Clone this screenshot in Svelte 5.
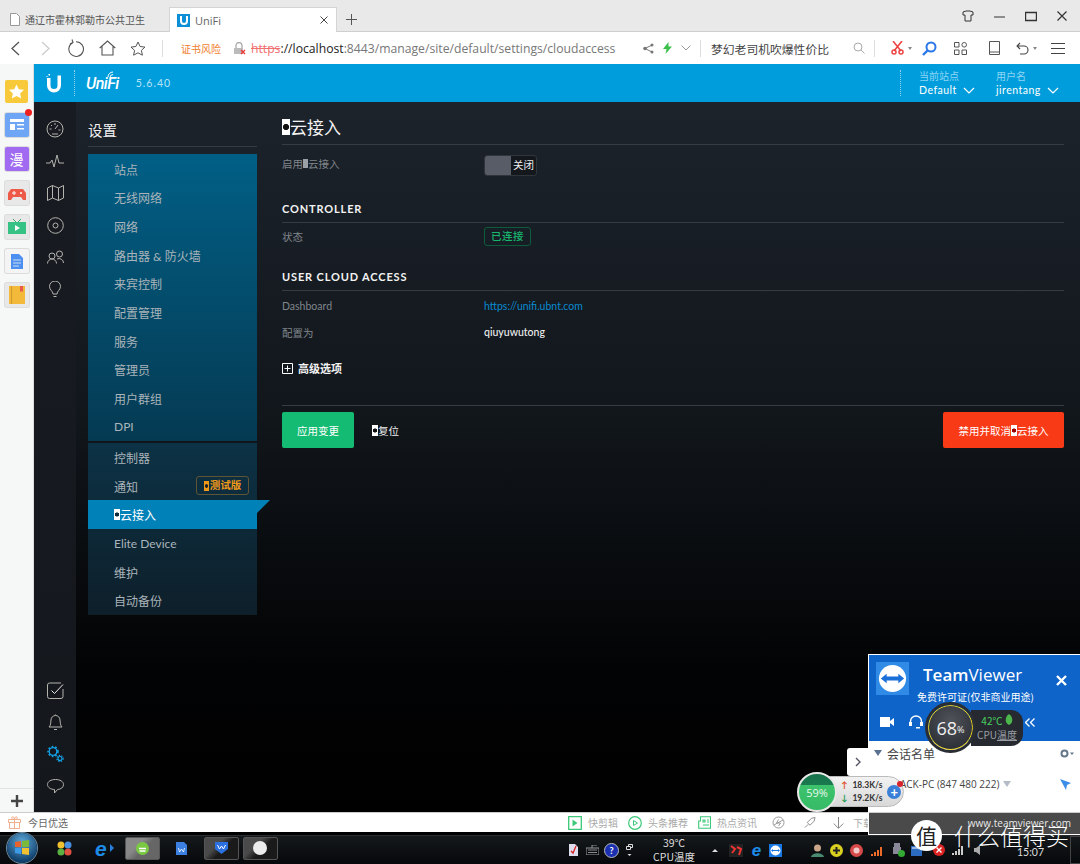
<script>
  const menuOne = ["站点", "无线网络", "网络", "路由器 & 防火墙", "来宾控制", "配置管理", "服务", "管理员", "用户群组", "DPI"];
  const stripIcons = [
    { bg: "#6ea5f5", kind: "news" },
    { bg: "#a06bf0", kind: "comic" },
    { bg: "#e8e8e8", kind: "game" },
    { bg: "#e8e8e8", kind: "tv" },
    { bg: "#f4f4f4", kind: "doc" },
    { bg: "#e8e8e8", kind: "book" },
  ];
</script>

<div class="screen">
  <div class="tabbar">
    <div class="tab">
      <svg width="10" height="13" viewBox="0 0 10 13"><path d="M.5.5h6l3 3v9h-9z" fill="#fff" stroke="#999" /></svg>
      <span class="tab-title">通辽市霍林郭勒市公共卫生</span>
    </div>
    <div class="tab active">
      <span class="favicon"><svg width="10" height="10" viewBox="0 0 10 10"><path d="M2 1v5a3 3 0 0 0 6 0V1" fill="none" stroke="#fff" stroke-width="2" /></svg></span>
      <span class="tab-name">UniFi</span>
      <svg class="tab-x" width="8" height="8" viewBox="0 0 8 8"><path d="M.5.5l7 7M7.500.5l-7 7" stroke="#444" /></svg>
    </div>
    <svg class="plus" width="11" height="11" viewBox="0 0 11 11"><path d="M5.500 0v11M0 5.500h11" stroke="#555" /></svg>
    <div class="winctl">
      <svg width="12" height="12" viewBox="0 0 12 12"><path d="M1 2l3-1h4l3 1v3H9v6H3V5H1z" fill="none" stroke="#333" /></svg>
      <svg width="11" height="11" viewBox="0 0 11 11"><path d="M0 6h11" stroke="#333" /></svg>
      <svg width="12" height="11" viewBox="0 0 12 11"><path d="M.5 1.500h11v8H.5z" fill="none" stroke="#333" stroke-width="1.400" /></svg>
      <svg width="10" height="10" viewBox="0 0 10 10"><path d="M.5.500l9 9M9.500.500l-9 9" stroke="#333" stroke-width="1.200" /></svg>
    </div>
  </div>

  <div class="addressbar">
    <svg class="nav-back" width="9" height="15" viewBox="0 0 9 15"><path d="M8 1L1 7.500l7 6.500" fill="none" stroke="#555" stroke-width="1.300" /></svg>
    <svg class="nav-fwd" width="9" height="15" viewBox="0 0 9 15"><path d="M1 1l7 6.500L1 14" fill="none" stroke="#ccc" stroke-width="1.300" /></svg>
    <svg class="nav-reload" width="17" height="18" viewBox="0 0 17 18"><path d="M5 3.500a7.300 7.300 0 1 0 3-.7M4 .5l1 3-3 1.200" fill="none" stroke="#555" stroke-width="1.100" /></svg>
    <svg class="nav-home" width="17" height="16" viewBox="0 0 17 16"><path d="M.7 8L8.500 1l7.800 7M3 6.500V15h11V6.500" fill="none" stroke="#555" stroke-width="1.100" /></svg>
    <svg class="nav-star" width="16" height="15" viewBox="0 0 16 15"><path d="M8 1l2.100 4.500 4.900.6-3.600 3.300 1 4.800L8 11.800l-4.400 2.400 1-4.800L1 6.100l4.900-.6z" fill="none" stroke="#555" /></svg>
    <span class="sep first"></span>
    <span class="risk">证书风险</span>
    <svg class="lock" width="13" height="13" viewBox="0 0 13 13"><path d="M3 6V3.500a3 3 0 0 1 6 0V6" fill="none" stroke="#aaa" stroke-width="1.300" /><path d="M1 6h9v6H1z" fill="#bbb" /><path d="M8 8l4 4M12 8l-4 4" stroke="#e33" stroke-width="1.300" /></svg>
    <span class="url"><s>https</s><b>://localhost</b>:8443/manage/site/default/settings/cloudaccess</span>
    <svg class="share" width="11" height="11" viewBox="0 0 11 11"><circle cx="2" cy="5.500" r="1.800" fill="#777" /><circle cx="9" cy="2" r="1.500" fill="#777" /><circle cx="9" cy="9" r="1.500" fill="#777" /><path d="M2 5.500L9 2M2 5.500L9 9" stroke="#777" /></svg>
    <svg class="bolt" width="9" height="12" viewBox="0 0 9 12"><path d="M5.500 0L0 7h3.500L2.500 12 9 4.500H5.500z" fill="#3cc04c" /></svg>
    <svg class="drop" width="10" height="6" viewBox="0 0 10 6"><path d="M.5.500L5 5 9.500.500" fill="none" stroke="#999" /></svg>
    <span class="sep"></span>
    <span class="search-text">梦幻老司机吹爆性价比</span>
    <svg class="glass" width="12" height="12" viewBox="0 0 12 12"><circle cx="5" cy="5" r="4" fill="none" stroke="#aaa" /><path d="M8 8l3.500 3.500" stroke="#aaa" /></svg>
    <span class="sep"></span>
    <svg class="scissors" width="13" height="14" viewBox="0 0 13 14"><path d="M2 0l8 10M11 0L3 10" stroke="#ee4444" stroke-width="1.600" /><circle cx="3" cy="11" r="2" fill="none" stroke="#ee4444" stroke-width="1.500" /><circle cx="10" cy="11" r="2" fill="none" stroke="#ee4444" stroke-width="1.500" /></svg>
    <span class="caret"></span>
    <svg class="blue-glass" width="15" height="15" viewBox="0 0 15 15"><circle cx="9" cy="6" r="4.500" fill="none" stroke="#2a78e8" stroke-width="2" /><path d="M6 9l-5 5" stroke="#2a78e8" stroke-width="2.400" /></svg>
    <svg class="apps" width="13" height="13" viewBox="0 0 13 13"><path d="M.5.500h4.500v4.500H.5zM.5 8h4.500v4.500H.5zM8 8h4.500v4.500H8z" fill="none" stroke="#555" /><circle cx="10.200" cy="2.800" r="2.300" fill="none" stroke="#555" /></svg>
    <svg class="tablet" width="11" height="14" viewBox="0 0 11 14"><path d="M.5.500h10v13H.5zM.5 11h10" fill="none" stroke="#555" /></svg>
    <svg class="undo" width="13" height="13" viewBox="0 0 13 13"><path d="M4 1L1 4l3 3M1 4h7a3.800 3.800 0 0 1 0 8H4" fill="none" stroke="#444" stroke-width="1.100" /></svg>
    <span class="caret"></span>
    <svg class="burger" width="14" height="11" viewBox="0 0 14 11"><path d="M0 .5h14M0 5.500h14M0 10.500h14" stroke="#444" /></svg>
  </div>

  <div class="middle">
    <aside class="strip">
      <div class="fav"><svg width="15" height="15" viewBox="0 0 16 15"><path d="M8 0l2.400 5 5.600.7-4.100 3.800 1.100 5.500-5-2.800L3 15l1.100-5.500L0 5.700 5.600 5z" fill="#fff" /></svg></div>
      {#each stripIcons as icon}
        <div class="strip-icon" style="background: {icon.bg}">
          {#if icon.kind === "news"}
            <span class="red-dot"></span>
            <svg width="16" height="14" viewBox="0 0 16 14"><path d="M1 1h14v3H1zM1 6h5v6H1zM8 6h7v1.500H8zM8 10h7v1.500H8z" fill="#fff" /></svg>
          {:else if icon.kind === "comic"}
            <span class="comic">漫</span>
          {:else if icon.kind === "game"}
            <svg width="18" height="15" viewBox="0 0 18 15"><path d="M3 3h12l3 4v7h-3l-2-3H5l-2 3H0V7z" fill="#ee5a48" /><path d="M4 7h4M6 5v4" stroke="#fff" /><circle cx="13" cy="7" r="1" fill="#fff" /></svg>
          {:else if icon.kind === "tv"}
            <svg width="18" height="16" viewBox="0 0 18 16"><path d="M5 0l3 3M13 0l-3 3" stroke="#35a86a" /><path d="M0 3h18v12H0z" fill="#35c284" /><path d="M7 6l5 3-5 3z" fill="#fff" /></svg>
          {:else if icon.kind === "doc"}
            <svg width="12" height="15" viewBox="0 0 12 15"><path d="M0 0h8l4 4v11H0z" fill="#4d8ff0" /><path d="M2 6h8M2 9h8M2 12h6" stroke="#cde" /></svg>
          {:else}
            <svg width="16" height="18" viewBox="0 0 16 18"><path d="M0 0h16v18H0z" fill="#f2b93a" /><path d="M2 0h1v18H2z" fill="#d2982a" /><path d="M11 0h3v6l-1.500-1L11 6z" fill="#e85a4a" /></svg>
          {/if}
        </div>
      {/each}
      <div class="strip-add">
        <svg width="12" height="12" viewBox="0 0 12 12"><path d="M6 0v12M0 6h12" stroke="#444" stroke-width="2.400" /></svg>
      </div>
    </aside>

    <div class="app">
      <header class="topbar">
        <svg class="u-logo" width="16" height="19" viewBox="0 0 16 19"><path d="M4.500 4v7.500a3.500 3.500 0 0 0 7 0V1.500h3.500v10a7 7 0 0 1-14 0V4z" fill="#fff" /><path d="M2.500 0h1.500v1.500H2.500zM.5 2h1v1h-1z" fill="#fff" /></svg>
        <span class="logo-sep"></span>
        <span class="brand">UniFi<svg class="arcs" width="9" height="7" viewBox="0 0 9 7"><path d="M1 6a5 5 0 0 1 5-5M3 6.500a3 3 0 0 1 3-3" fill="none" stroke="#fff" /></svg></span>
        <span class="version">5.6.40</span>
        <span class="logo-sep right"></span>
        <div class="picker site">
          <small>当前站点</small>
          <span>Default <svg width="12" height="7" viewBox="0 0 12 7"><path d="M1 1l5 5 5-5" fill="none" stroke="#fff" stroke-width="1.200" /></svg></span>
        </div>
        <div class="picker">
          <small>用户名</small>
          <span>jirentang <svg width="12" height="7" viewBox="0 0 12 7"><path d="M1 1l5 5 5-5" fill="none" stroke="#fff" stroke-width="1.200" /></svg></span>
        </div>
      </header>

      <div class="workspace">
        <nav class="rail">
          <div class="rail-group">
            <svg width="18" height="18" viewBox="0 0 18 18"><circle cx="9" cy="9" r="8" /><path d="M9 9l3-4M3.500 9h2M12.500 10h2M5 5l1 1M9 3v2M6 14h6" /></svg>
            <svg width="18" height="14" viewBox="0 0 18 14"><path d="M0 9h4l2-3 2 7 3-12 2 8h5" /></svg>
            <svg width="17" height="16" viewBox="0 0 17 16"><path d="M.5 3l5-2.500 6 2.500 5-2.500V13l-5 2.500-6-2.500-5 2.500zM5.500.5v12.500M11.500 3v12.500" /></svg>
            <svg width="17" height="17" viewBox="0 0 17 17"><circle cx="8.500" cy="8.500" r="7.800" /><circle cx="8.500" cy="8.500" r="2.500" /></svg>
            <svg width="17" height="14" viewBox="0 0 17 14"><circle cx="5" cy="6" r="3" /><circle cx="12.500" cy="4" r="3" /><path d="M.5 13.500a4.500 4.500 0 0 1 9 0M10 9a4.500 4.500 0 0 1 6.500 4" /></svg>
            <svg width="12" height="17" viewBox="0 0 12 17"><path d="M4 13c0-3-3.500-4-3.500-7.500a5.500 5.500 0 0 1 11 0C11.500 9 8 10 8 13zM4.500 15.500h3" /></svg>
          </div>
          <div class="rail-group">
            <svg width="17" height="17" viewBox="0 0 17 17"><path d="M14 1H2.500a2 2 0 0 0-2 2v11.500a2 2 0 0 0 2 2H14a2 2 0 0 0 2-2V7" /><path class="bright" d="M4.500 8.500l3 3L16 2.500" /></svg>
            <svg width="15" height="17" viewBox="0 0 15 17"><path d="M1 13c2-2 1.500-4 2-7a4.500 4.500 0 0 1 9 0c.5 3 0 5 2 7zM6 15.500h3M7.500 1V.5" /></svg>
            <svg class="gear" width="17" height="18" viewBox="0 0 17 18"><circle cx="6" cy="6.500" r="3.800" stroke-width="1.300" /><circle cx="6" cy="6.500" r="5" stroke-width="1.500" stroke-dasharray="1.700 1.900" /><circle cx="13" cy="13.500" r="2" stroke-width="1.100" /><circle cx="13" cy="13.500" r="3.100" stroke-width="1.200" stroke-dasharray="1.300 1.300" /></svg>
            <svg width="17" height="15" viewBox="0 0 17 15"><path d="M8.500.5c4.500 0 8 2 8 5s-3 5-6 5l-3 3.500v-3.500c-3.500 0-7-2-7-5s3.500-5 8-5z" /></svg>
          </div>
        </nav>

        <div class="settings">
          <div class="side">
            <h2>设置</h2>
            <ul class="panel one">
              {#each menuOne as item}
                <li>{item}</li>
              {/each}
            </ul>
            <ul class="panel two">
              <li>控制器</li>
              <li>通知 <span class="beta"><i class="orange-box"></i>测试版</span></li>
              <li class="current"><i class="box"></i>云接入</li>
              <li>Elite Device</li>
              <li>维护</li>
              <li>自动备份</li>
            </ul>
          </div>

          <main class="content">
            <h1><i class="box big"></i>云接入</h1>
            <div class="row enable">
              <label>启用<i class="box dim"></i>云接入</label>
              <div class="toggle"><span class="knob"></span><span class="off">关闭</span></div>
            </div>
            <h3 class="ctrl">CONTROLLER</h3>
            <div class="row status">
              <label>状态</label>
              <span class="connected">已连接</span>
            </div>
            <h3 class="cloud">USER CLOUD ACCESS</h3>
            <div class="row dash">
              <label>Dashboard</label>
              <a href="#top">https://unifi.ubnt.com</a>
            </div>
            <div class="row cfg">
              <label>配置为</label>
              <strong>qiuyuwutong</strong>
            </div>
            <div class="advanced">
              <svg width="11" height="11" viewBox="0 0 11 11"><path d="M.5.500h10v10H.5zM5.500 2.500v6M2.500 5.500h6" fill="none" stroke="#fff" /></svg>
              高级选项
            </div>
            <div class="actions">
              <button class="apply">应用变更</button>
              <span class="reset"><i class="box"></i>复位</span>
              <button class="disable">禁用并取消<i class="box"></i>云接入</button>
            </div>
          </main>
        </div>
      </div>
    </div>
  </div>

  <div class="statusbar">
    <svg class="gift" width="13" height="13" viewBox="0 0 13 13"><path d="M.5 3.500h12v3H.5zM1.500 6.500h10v6h-10zM6.500 3.500v9M6.500 3.500C4 3.500 3 2 4 1s2.500.5 2.500 2.500zM6.500 3.500c2.500 0 3.500-1.500 2.500-2.500S6.500 1.500 6.500 3.500z" fill="none" stroke="#f0b090" /></svg>
    <span class="today">今日优选</span>
    <svg class="st-ico" width="14" height="14" viewBox="0 0 14 14"><path d="M.7.700h12.600v12.600H.7z" fill="none" stroke="#3cc878" stroke-width="1.300" /><path d="M4.500 3.500l5 3.500-5 3.500z" fill="#3cc878" /></svg>
    <span class="st-text">快剪辑</span>
    <svg class="st-ico" width="14" height="14" viewBox="0 0 14 14"><circle cx="7" cy="7" r="6.300" fill="none" stroke="#3cc878" stroke-width="1.200" /><path d="M5.500 4.500l4 2.500-4 2.500z" fill="none" stroke="#3cc878" /></svg>
    <span class="st-text">头条推荐</span>
    <svg class="st-ico" width="13" height="13" viewBox="0 0 13 13"><path d="M2.500.7h10v11.600H.7V5h1.800zM5 4h2v2H5zM9 4h2M9 6h2M5 9h6" fill="none" stroke="#3cc878" stroke-width="1.100" /></svg>
    <span class="st-text">热点资讯</span>
    <svg class="st-gray" width="13" height="13" viewBox="0 0 13 13"><circle cx="6.500" cy="6.500" r="5.500" fill="none" stroke="#999" /><path d="M2 9l9-5M6.500 3.500L4.500 7h4l-2 3" fill="none" stroke="#999" /></svg>
    <svg class="st-pin" width="12" height="13" viewBox="0 0 13 13"><path d="M12 1L8 2 3.500 6.500l3 3L11 5zM4.500 8.500L1 12" fill="none" stroke="#888" /></svg>
    <svg class="st-down" width="11" height="12" viewBox="0 0 11 12"><path d="M5.500 0v11M.7 6.500l4.800 4.800 4.800-4.800" fill="none" stroke="#888" /></svg>
    <span class="st-text dl">下载</span>
  </div>

  <div class="taskbar">
    <span class="orb"><svg width="16" height="16" viewBox="0 0 16 16"><path d="M1 2l6-1v6H1z" fill="#e8622e" /><path d="M8 1l7-1v7H8z" fill="#7cbb3a" /><path d="M1 8h6v6l-6-1z" fill="#3c9be8" /><path d="M8 8h7v7l-7-1z" fill="#f0c030" /></svg></span>
    <svg class="tk-hub" width="15" height="15" viewBox="0 0 15 15"><circle cx="4" cy="4" r="3.500" fill="#f0c030" /><circle cx="11" cy="4" r="3.500" fill="#4a90e0" /><circle cx="4" cy="11" r="3.500" fill="#5ab040" /><circle cx="11" cy="11" r="3.500" fill="#e05040" /></svg>
    <span class="tk-ie">e</span>
    <span class="tk-arrow"></span>
    <span class="tk-btn lit"><svg width="13" height="13" viewBox="0 0 13 13"><circle cx="6.500" cy="6.500" r="6.500" fill="#7ac943" /><path d="M3 6.500h7M3.500 9h6" stroke="#fff" stroke-width="1.500" /></svg></span>
    <span class="tk-plain"><svg width="11" height="13" viewBox="0 0 11 13"><path d="M0 0h8l3 3v10H0z" fill="#3b7fe0" /><path d="M2.500 6l1 4 2-3 2 3 1-4" fill="none" stroke="#fff" stroke-width=".8" /></svg></span>
    <span class="tk-btn"><svg width="13" height="12" viewBox="0 0 13 12"><path d="M0 0h13v7l-6.500 5L0 7z" fill="#2a70e0" /><path d="M2.500 3l2 4 2-3 2 3 2-4" fill="none" stroke="#fff" /></svg></span>
    <span class="tk-btn"><svg width="14" height="14" viewBox="0 0 14 14"><circle cx="7" cy="7" r="7" fill="#ececec" /></svg></span>
    <div class="tray">
      <svg width="9" height="12" viewBox="0 0 9 12"><path d="M0 0h6l3 3v9H0z" fill="#dde" /><path d="M2 7l2 2 3-7" fill="none" stroke="#d22" stroke-width="1.300" /></svg>
      <svg class="tr-kb" width="13" height="10" viewBox="0 0 13 10"><path d="M0 3h13v7H0zM6 3V0h5" fill="none" stroke="#999" /><path d="M2 5h9M2 7.500h9" stroke="#888" /></svg>
      <span class="help">?</span>
      <svg class="tr-win" width="7" height="13" viewBox="0 0 7 13"><path d="M.5 2.500h4v3h-4zM2.500 2.500v-2h4v3h-2" fill="none" stroke="#ddd" /><path d="M1.500 10l2 2 2-2z" fill="#ddd" /></svg>
      <div class="clock-temp"><span>39℃</span><span>CPU温度</span></div>
      <span class="up-caret"></span>
      <span class="tr-a"><svg width="14" height="13" viewBox="0 0 14 13"><path d="M0 0h14v13H0z" fill="#222" /><path d="M2 2l4 3-3 4M8 3l4 2-2 6" stroke="#e33" stroke-width="2" fill="none" /></svg></span>
      <span class="tk-ie small">e</span>
      <svg class="tr-tv" width="13" height="13" viewBox="0 0 13 13"><path d="M0 0h13v13H0z" fill="#1877e0" /><circle cx="6.500" cy="6.500" r="5" fill="#fff" /><path d="M2 6.500l2-1.500v1h5V5l2 1.500L9 8V7H4v1z" fill="#1877e0" /></svg>
      <svg class="tr-user" width="13" height="13" viewBox="0 0 13 13"><circle cx="6.500" cy="4" r="3.500" fill="#c9a68a" /><path d="M0 13c1-5 12-5 13 0z" fill="#4a8a70" /></svg>
      <svg class="tr-yellow" width="13" height="13" viewBox="0 0 13 13"><circle cx="6.500" cy="6.500" r="6.500" fill="#d9d020" /><path d="M3 6.500h7M6.500 3v7" stroke="#222" stroke-width="2" /></svg>
      <svg class="tr-red" width="13" height="13" viewBox="0 0 13 13"><circle cx="6.500" cy="6.500" r="6.500" fill="#d84a4a" /><circle cx="6.500" cy="6.500" r="3" fill="#f2c8c8" /></svg>
      <svg class="tr-sig" width="13" height="11" viewBox="0 0 13 11"><path d="M0 9h2v2H0zM3 7h2v4H3zM6 5h2v6H6zM9 2h2v9H9z" fill="#ee6a28" /></svg>
      <svg class="tr-usb" width="13" height="14" viewBox="0 0 13 14"><path d="M2 0h6v4H2zM1 4h8v7H1z" fill="#889" /><circle cx="9.500" cy="10.500" r="3.500" fill="#3a3" /></svg>
      <svg class="tr-flag" width="11" height="11" viewBox="0 0 11 11"><path d="M0 1h11v10H0z" fill="#2c6cc0" /><path d="M1 3h9" stroke="#fff" /></svg>
      <svg class="tr-err" width="12" height="12" viewBox="0 0 12 12"><circle cx="6" cy="6" r="6" fill="#d22" /><path d="M3.500 3.500l5 5M8.500 3.500l-5 5" stroke="#fff" stroke-width="1.400" /></svg>
      <svg class="tr-bars" width="13" height="10" viewBox="0 0 13 10"><path d="M0 8h2v2H0zM3 6h2v4H3zM6 4h2v6H6zM9 1h2v9H9z" fill="#ccc" /></svg>
      <svg class="tr-vol" width="8" height="10" viewBox="0 0 8 10"><path d="M0 3h2l4-3v10L2 7H0z" fill="#aaa" /></svg>
      <span class="clock">15:07</span>
      <span class="show-desktop"></span>
    </div>
  </div>

  <aside class="teamviewer">
    <div class="tv-head">
      <div class="tv-logo">
        <svg width="33" height="33" viewBox="0 0 34 34"><path d="M0 0h34v34H0z" fill="#2f8be6" /><circle cx="17" cy="17" r="14" fill="#fff" /><path d="M5 17l6-5v3h12v-3l6 5-6 5v-3H11v3z" fill="#1b6fd8" /></svg>
      </div>
      <div class="tv-title"><span class="tv-name"><b>Team</b>Viewer</span></div>
      <svg class="tv-close" width="11" height="11" viewBox="0 0 11 11"><path d="M1 1l9 9M10 1l-9 9" stroke="#fff" stroke-width="2.400" /></svg>
      <div class="tv-licence">免费许可证(仅非商业用途)</div>
    </div>
    <div class="tv-tools">
      <svg width="14" height="10" viewBox="0 0 14 10"><path d="M0 0h10v10H0zM10 4l4-3v8l-4-3z" fill="#fff" /></svg>
      <svg class="tv-phones" width="14" height="14" viewBox="0 0 14 14"><path d="M1.500 8V6.500a5.500 5.500 0 0 1 11 0V8" fill="none" stroke="#fff" stroke-width="1.400" /><path d="M0 7h3v4H0zM11 7h3v4h-3zM7 12h4v1.500H7z" fill="#fff" /></svg>
    </div>
    <div class="tv-list">
      <div class="tv-list-head">
        <span class="tri"></span>
        <span class="tv-group">会话名单</span>
        <svg class="tv-gear" width="14" height="9" viewBox="0 0 14 9"><circle cx="4.500" cy="4.500" r="3" fill="none" stroke="#66788c" stroke-width="2" /><path d="M10 3.500h4l-2 2.500z" fill="#66788c" /></svg>
      </div>
      <div class="tv-peer">
        <span>ACK-PC (847 480 222)</span>
        <span class="tri gray"></span>
        <svg class="tv-cursor" width="11" height="11" viewBox="0 0 11 11"><path d="M0 0l11 4-4 2-1 5z" fill="#3a8de8" /></svg>
      </div>
    </div>
    <div class="tv-foot">www.teamviewer.com</div>
  </aside>

  <div class="cpu-gadget">
    <div class="ring"><span>68</span><small>%</small></div>
    <div class="cpu-info">
      <span class="cpu-temp">42℃ <svg width="8" height="11" viewBox="0 0 7 10"><path d="M3.500 0c4 3 4 8 0 10-4-2-4-7 0-10z" fill="#4cb84c" /></svg></span>
      <span class="cpu-label">CPU<u>温度</u></span>
    </div>
  </div>
  <svg class="tv-chevrons" width="10" height="9" viewBox="0 0 10 9"><path d="M4.500.5l-4 4 4 4M9.500.5l-4 4 4 4" fill="none" stroke="#fff" stroke-width="1.300" /></svg>

  <div class="collapse"><svg width="6" height="10" viewBox="0 0 6 10"><path d="M1 1l4 4-4 4" fill="none" stroke="#556" stroke-width="1.400" /></svg></div>

  <div class="net-gadget">
    <div class="ball"><span>59%</span></div>
    <div class="speeds">
      <span><i class="up">↑</i>18.3K/s</span>
      <span><i class="down">↓</i>19.2K/s</span>
    </div>
    <span class="net-plus">+<i></i></span>
  </div>

  <div class="watermark">
    <span class="wm-circle">值</span>
    <span class="wm-text">什么值得买</span>
  </div>
</div>

<style>
  :global(body) {
    margin: 0;
    background: #000;
  }

  .screen {
    position: relative;
    width: 1080px;
    height: 864px;
    overflow: hidden;
    display: flex;
    flex-direction: column;
    font-family: Lato, "Noto Sans CJK SC", sans-serif;
    font-size: 11px;
  }

  /* browser chrome */
  .tabbar {
    height: 32px;
    flex: none;
    box-sizing: border-box;
    background: #e9e9e9;
    border-bottom: 1px solid #cfcfcf;
    display: flex;
    align-items: flex-end;
    padding-left: 10px;
  }

  .tab {
    width: 159px;
    height: 23px;
    display: flex;
    align-items: center;
    gap: 5px;
    font-family: "Noto Sans CJK SC", sans-serif;
    color: #555;
  }

  .tab-title {
    white-space: nowrap;
    width: 127px;
    font-size: 10px;
  }

  .tab.active {
    width: 168px;
    box-sizing: border-box;
    height: 25px;
    margin-bottom: -1px;
    background: #fff;
    border: 1px solid #d4d4d4;
    border-bottom: none;
    padding-left: 7px;
    color: #666;
  }

  .favicon {
    width: 13px;
    height: 13px;
    background: #0c8fd6;
    display: flex;
    align-items: center;
    justify-content: center;
  }

  .tab-name {
    font-size: 11px;
    font-family: "Open Sans", sans-serif;
  }

  .tab-x {
    margin-left: auto;
    margin-right: 8px;
  }

  .plus {
    margin: 0 0 6px 9px;
  }

  .winctl {
    margin-left: auto;
    margin-bottom: 9px;
    padding-right: 13px;
    display: flex;
    align-items: center;
    gap: 20px;
  }

  .addressbar {
    height: 32px;
    flex: none;
    background: #fff;
    display: flex;
    align-items: center;
    position: relative;
  }

  .nav-back { margin-left: 11px; }
  .nav-fwd { margin-left: 21px; }
  .nav-reload { margin-left: 18px; }
  .nav-home { margin-left: 14px; }
  .nav-star { margin-left: 14px; }

  .sep {
    width: 1px;
    height: 17px;
    background: #ddd;
    margin-left: 9px;
  }

  .sep.first { margin-left: 16px; }

  .risk {
    margin-left: 18px;
    color: #f08030;
    font-size: 10px;
    font-family: "Noto Sans CJK SC", sans-serif;
  }

  .lock { margin-left: 12px; }

  .url {
    margin-left: 5px;
    font-family: "Open Sans", sans-serif;
    font-size: 12.200px;
    color: #777;
    white-space: nowrap;
    width: 381px;
  }

  .url s { color: #f07070; }
  .url b { font-weight: 400; color: #222; }

  .share { margin-left: 11px; }
  .bolt { margin-left: 9px; }
  .drop { margin-left: 9px; }

  .search-text {
    margin-left: 10px;
    width: 136px;
    color: #444;
    font-size: 11.800px;
    font-family: "Noto Sans CJK SC", sans-serif;
    white-space: nowrap;
  }

  .glass { margin-left: 6px; }
  .scissors { margin-left: 16px; }

  .caret {
    width: 0;
    height: 0;
    border: 2.500px solid transparent;
    border-top: 3px solid #888;
    margin: 3px 0 0 4px;
  }

  .blue-glass { margin-left: 10px; }
  .apps { margin-left: 17px; }
  .tablet { margin-left: 22px; }
  .undo { margin-left: 16px; }
  .burger { margin-left: 14px; }

  .middle {
    flex: 1;
    display: flex;
    min-height: 0;
  }

  /* left strip of the browser */
  .strip {
    width: 33px;
    flex: none;
    background: #f6f7f7;
    border-right: 1px solid #ddd;
    display: flex;
    flex-direction: column;
    align-items: center;
    position: relative;
    box-sizing: content-box;
  }

  .fav {
    width: 23px;
    height: 23px;
    margin-top: 16px;
    border-radius: 2px;
    background: #f8c93a;
    display: flex;
    align-items: center;
    justify-content: center;
  }

  .strip-icon {
    position: relative;
    width: 24px;
    height: 24px;
    margin-top: 10px;
    display: flex;
    align-items: center;
    justify-content: center;
    border-radius: 2px;
    box-shadow: 0 0 0 1px #dcdcdc;
  }

  .red-dot {
    position: absolute;
    top: -4px;
    right: -3px;
    width: 7px;
    height: 7px;
    border-radius: 50%;
    background: #f02020;
  }

  .comic {
    color: #fff;
    font-size: 14px;
    line-height: 1;
    font-family: "Noto Sans CJK SC", sans-serif;
  }

  .strip-add {
    margin-top: auto;
    width: 100%;
    height: 23px;
    border-top: 1px solid #e2e2e2;
    display: flex;
    align-items: center;
    justify-content: center;
  }

  /* UniFi app */
  .app {
    flex: 1;
    display: flex;
    flex-direction: column;
    min-width: 0;
  }

  .topbar {
    height: 38px;
    flex: none;
    background: #009ddc;
    display: flex;
    align-items: center;
    color: #fff;
  }

  .u-logo { margin-left: 12px; }

  .logo-sep {
    width: 1px;
    height: 26px;
    margin-left: 12px;
    border-left: 1px dotted #8fd3f0;
  }

  .logo-sep.right { margin-left: auto; }

  .brand {
    position: relative;
    margin-left: 10px;
    font-family: Roboto, sans-serif;
    font-style: italic;
    font-weight: 500;
    font-size: 16px;
    letter-spacing: -0.5px;
  }

  .arcs {
    position: absolute;
    left: 21px;
    top: -3px;
  }

  .version {
    margin-left: 17px;
    font-size: 10.500px;
    letter-spacing: 1px;
    color: #b5e3f6;
  }

  .picker {
    display: flex;
    flex-direction: column;
    margin-right: 24px;
    width: 60px;
    line-height: 14px;
  }

  .picker.site {
    margin-left: 17px;
    margin-right: 17px;
  }

  .picker small {
    font-size: 10px;
    color: #8ed6f4;
    font-family: "Noto Sans CJK SC", sans-serif;
  }

  .picker span {
    font-size: 10.500px;
    font-weight: 400;
    white-space: nowrap;
    letter-spacing: 0.500px;
  }

  .picker svg { margin-left: 3px; }

  .workspace {
    flex: 1;
    min-height: 0;
    display: flex;
    background: linear-gradient(#1c232b 0, #11161b 45%, #020304 80%, #000 100%);
  }

  .rail {
    width: 42px;
    flex: none;
    background: linear-gradient(#181c22, #14171c);
    display: flex;
    flex-direction: column;
    align-items: center;
    justify-content: space-between;
    padding: 11px 0 10px;
    box-sizing: border-box;
  }

  .rail svg {
    display: block;
    fill: none;
    stroke: #b4b4ae;
    stroke-width: 1;
  }

  .rail-group {
    display: grid;
    grid-auto-rows: 32px;
    place-items: center;
  }

  .rail svg .bright { stroke: #eee; }
  .rail svg.gear { stroke: #14a4ea; }

  .settings {
    flex: 1;
    display: flex;
    min-width: 0;
  }

  .side {
    width: 169px;
    margin-left: 12px;
    flex: none;
  }

  .side h2 {
    margin: 0;
    height: 45px;
    box-sizing: border-box;
    padding-top: 18px;
    border-bottom: 1px solid #363c43;
    font-weight: 400;
    font-size: 14.500px;
    line-height: 19px;
    color: #f0f0f0;
    font-family: "Noto Sans CJK SC", sans-serif;
  }

  .panel {
    list-style: none;
    margin: 7px 0 0;
    padding: 0;
    color: #aab4ba;
    font-size: 12px;
  }

  .panel.one {
    background: linear-gradient(#015f86, #053a52);
  }

  .panel.two {
    margin-top: 2px;
    background: linear-gradient(#0c3245, #0e1f2a);
  }

  .panel li {
    height: 28.670px;
    box-sizing: border-box;
    padding: 1.500px 0 0 26px;
    display: flex;
    align-items: center;
    position: relative;
    white-space: pre;
  }

  .panel li.current {
    background: #0081b8;
    color: #fff;
  }

  .panel li.current::after {
    content: "";
    position: absolute;
    left: 100%;
    top: 0;
    border-top: 13px solid #0081b8;
    border-right: 13px solid transparent;
  }

  .beta {
    position: absolute;
    right: 8px;
    top: 5px;
    width: 53px;
    height: 19px;
    box-sizing: border-box;
    border: 1px solid #5f5535;
    border-radius: 3px;
    color: #f09818;
    font-size: 10.500px;
    font-weight: 700;
    line-height: 17px;
    display: flex;
    align-items: center;
    justify-content: center;
    gap: 1px;
  }

  .orange-box {
    width: 5px;
    height: 10px;
    background: #f09818 radial-gradient(circle, #222 1.500px, transparent 2px);
  }

  .box {
    display: inline-block;
    width: 6px;
    height: 11px;
    background: #fff radial-gradient(circle, #0b2a3a 1.800px, transparent 2.300px);
  }

  .box.big {
    width: 8px;
    height: 16px;
    background: #fff radial-gradient(circle, #111 2.800px, transparent 3.300px);
  }

  .box.dim {
    background: #9aa0a6;
    width: 5px;
    height: 9px;
  }

  .content {
    flex: 1;
    margin: 0 16px 0 25px;
    min-width: 0;
    color: #8f959b;
    font-size: 10.500px;
  }

  .content h1 {
    margin: 0;
    height: 43px;
    box-sizing: border-box;
    padding-top: 11px;
    padding-bottom: 4px;
    border-bottom: 1px solid #363c43;
    font-weight: 400;
    font-size: 17px;
    line-height: 22px;
    color: #f4f4f4;
    font-family: "Noto Sans CJK SC", sans-serif;
    display: flex;
    align-items: center;
  }

  .row {
    display: flex;
    align-items: center;
    height: 20px;
  }

  .row label {
    width: 202px;
    flex: none;
    display: flex;
    align-items: center;
    color: #80868c;
  }

  .enable {
    margin-top: 8px;
    align-items: flex-start;
    height: 22px;
  }

  .enable label { height: 20px; }

  .toggle {
    width: 53px;
    height: 21px;
    margin-top: 2px;
    flex: none;
    box-sizing: border-box;
    background: #14181d;
    border: 1px solid #30353b;
    border-radius: 3px;
    display: flex;
  }

  .knob {
    width: 26px;
    background: #585c66;
    border-radius: 2px 0 0 2px;
  }

  .off {
    flex: 1;
    color: #eee;
    text-align: center;
    line-height: 19px;
    font-size: 10.500px;
  }

  h3 {
    margin: 0;
    color: #f2f2f2;
    font-family: Lato, sans-serif;
    font-weight: 700;
    font-size: 11px;
    letter-spacing: 0.850px;
    line-height: 14px;
    padding-bottom: 6px;
    border-bottom: 1px solid #363c43;
  }

  h3.ctrl { margin-top: 27px; }
  .status { margin-top: 3px; }

  .connected {
    width: 47px;
    height: 19px;
    box-sizing: border-box;
    border: 1px solid #0d5c3c;
    border-radius: 3px;
    color: #18b56e;
    font-size: 10.500px;
    font-weight: 500;
    text-align: center;
    line-height: 17px;
    letter-spacing: 0.500px;
  }

  h3.cloud { margin-top: 24px; }
  .dash { margin-top: 5px; }

  .row a {
    color: #0a8ad0;
    text-decoration: none;
    font-size: 10.500px;
  }

  .cfg { margin-top: 6px; }

  .row strong {
    color: #eee;
    font-weight: 500;
    font-size: 10.500px;
  }

  .advanced {
    margin-top: 17px;
    color: #f2f2f2;
    font-weight: 700;
    font-size: 11px;
    height: 18px;
    display: flex;
    align-items: center;
    gap: 5px;
  }

  .actions {
    margin-top: 28px;
    border-top: 1px solid #363c43;
    padding-top: 6px;
    display: flex;
    align-items: center;
  }

  button {
    border: none;
    border-radius: 2px;
    height: 36px;
    color: #fff;
    font: inherit;
    font-size: 10.500px;
    padding: 0;
    display: flex;
    align-items: center;
    justify-content: center;
  }

  .apply {
    width: 72px;
    background: #14bb72;
  }

  .reset {
    margin-left: 18px;
    color: #eee;
    display: flex;
    align-items: center;
  }

  .reset .box { background: #fff radial-gradient(circle, #111 1.800px, transparent 2.300px); }

  .disable {
    width: 121px;
    margin-left: auto;
    background: #f93a17;
  }

  .disable .box { background: #fff radial-gradient(circle, #900 1.800px, transparent 2.300px); }

  /* browser status bar */
  .statusbar {
    height: 20px;
    flex: none;
    background: #fff;
    border-top: 1px solid #ccc;
    box-sizing: border-box;
    display: flex;
    align-items: center;
    color: #aaa;
    font-family: "Noto Sans CJK SC", sans-serif;
    font-size: 10px;
    position: relative;
  }

  .gift { margin-left: 8px; }
  .today { margin-left: 7px; color: #666; width: 540px; }
  .st-text { margin: 0 10px 0 6px; white-space: nowrap; }
  .st-gray { margin-left: 5px; }
  .st-pin { margin-left: 19px; }
  .st-down { margin-left: 17px; }
  .dl { margin-left: 9px; }

  /* windows taskbar */
  .taskbar {
    height: 32px;
    flex: none;
    background: linear-gradient(#000 0 3px, #2a2d30 3px 4px, #15191c 4px, #06080a);
    box-sizing: border-box;
    display: flex;
    align-items: center;
  }

  .orb {
    width: 30px;
    height: 30px;
    margin-left: 7px;
    border-radius: 50%;
    background: radial-gradient(circle at 50% 30%, #5fa8d8, #10406c 75%);
    box-shadow: 0 0 0 1px #6a8aa0;
    display: flex;
    align-items: center;
    justify-content: center;
  }

  .tk-hub { margin-left: 20px; }

  .tk-ie {
    margin-left: 23px;
    color: #1d8be8;
    font: italic 700 21px/1 "Liberation Sans", sans-serif;
  }

  .tk-ie.small {
    width: 13px;
    margin-left: 7px;
    font-size: 17px;
    text-align: center;
  }

  .tk-arrow {
    margin-left: 3px;
    border-left: 4px solid #2a80e0;
    border-top: 4px solid transparent;
    border-bottom: 4px solid transparent;
  }

  .tk-btn {
    width: 35px;
    height: 23px;
    margin-left: 4px;
    border: 1px solid #555;
    border-radius: 2px;
    box-sizing: border-box;
    background: linear-gradient(135deg, #4a4a4a 35%, #1a1a1a 55%);
    display: flex;
    align-items: center;
    justify-content: center;
  }

  .tk-btn.lit {
    margin-left: 11px;
    background: linear-gradient(135deg, #888 35%, #666 55%);
  }

  .tk-plain {
    width: 38px;
    margin-left: 3px;
    display: flex;
    justify-content: center;
  }

  .tk-plain + .tk-btn { margin-left: 3px; }

  .tray {
    position: absolute;
    left: 569px;
    bottom: 0;
    height: 28px;
    display: flex;
    align-items: center;
    color: #ddd;
  }

  .tr-kb { margin-left: 8px; }

  .help {
    width: 13px;
    height: 13px;
    margin-left: 5px;
    border-radius: 50%;
    background: #1a30b0;
    border: 1px solid #bbb;
    color: #fff;
    font-size: 9px;
    font-weight: 700;
    text-align: center;
    line-height: 13px;
  }

  .tr-win { margin-left: 7px; }

  .clock-temp {
    margin-left: 16px;
    width: 50px;
    text-align: center;
    display: flex;
    flex-direction: column;
    font-size: 10.500px;
    line-height: 14px;
    font-family: "Noto Sans CJK SC", sans-serif;
  }

  .up-caret {
    margin-left: 13px;
    border: 3px solid transparent;
    border-bottom: 3px solid #ddd;
    border-top: none;
  }

  .tr-a { margin-left: 11px; line-height: 0; }
  .tr-tv { margin-left: 6px; }
  .tr-user { margin-left: 29px; }
  .tr-yellow { margin-left: 6px; }
  .tr-red { margin-left: 7px; }
  .tr-sig { margin-left: 8px; }
  .tr-usb { margin-left: 8px; }
  .tr-flag { margin-left: 6px; }
  .tr-err { margin-left: 11px; }
  .tr-bars { margin-left: 7px; }
  .tr-vol { margin-left: 9px; }

  .clock {
    margin-left: 35px;
    margin-top: 3px;
    font-size: 10.500px;
    color: #ddd;
  }

  .show-desktop {
    width: 9px;
    height: 26px;
    margin-left: 26px;
    border: 1px solid #444;
  }

  /* floating windows */
  .teamviewer {
    position: absolute;
    left: 868px;
    top: 654px;
    width: 212px;
    height: 181px;
    box-sizing: border-box;
    border: 1px solid #fff;
    border-right: none;
    display: flex;
    flex-direction: column;
    background: #fff;
  }

  .tv-head {
    position: relative;
    height: 48px;
    background: #0e64c8;
    color: #fff;
  }

  .tv-logo {
    position: absolute;
    left: 7px;
    top: 7px;
    line-height: 0;
  }

  .tv-title {
    position: absolute;
    left: 54px;
    top: 8px;
  }

  .tv-name {
    font-family: "Open Sans", sans-serif;
    font-size: 17px;
    line-height: 24px;
  }

  .tv-name b { font-weight: 600; }

  .tv-close {
    position: absolute;
    right: 13px;
    top: 20px;
  }

  .tv-licence {
    position: absolute;
    left: 48px;
    top: 35px;
    font-family: "Noto Sans CJK SC", sans-serif;
    font-size: 10px;
    line-height: 14px;
    white-space: nowrap;
  }

  .tv-tools {
    height: 38px;
    background: #0e64c8;
    display: flex;
    align-items: center;
    gap: 15px;
    padding-left: 11px;
  }

  .tv-list {
    flex: 1;
    color: #444;
  }

  .tv-list-head {
    height: 24px;
    display: flex;
    align-items: center;
    padding-left: 5px;
    font-family: "Noto Sans CJK SC", sans-serif;
    font-size: 12px;
    position: relative;
  }

  .tri {
    border: 4px solid transparent;
    border-top: 6px solid #5a7090;
    border-bottom: none;
    margin-right: 5px;
  }

  .tri.gray {
    border-top-color: #b4bcc8;
    margin: 0 0 0 4px;
  }

  .tv-gear {
    position: absolute;
    right: 6px;
    top: 8px;
  }

  .tv-peer {
    height: 28px;
    margin-top: 5px;
    display: flex;
    align-items: center;
    padding-left: 31px;
    font-size: 10px;
    font-family: "Open Sans", sans-serif;
    position: relative;
    white-space: nowrap;
  }

  .tv-cursor {
    position: absolute;
    right: 9px;
    top: 9px;
  }

  .tv-foot {
    height: 22px;
    background: #4a4a4a;
    color: #e8e8e8;
    text-align: right;
    padding-right: 9px;
    font-family: "Open Sans", sans-serif;
    font-size: 10px;
    line-height: 20px;
    border-top: 1px solid #ccc;
    box-sizing: border-box;
  }

  .cpu-gadget {
    position: absolute;
    left: 925px;
    top: 703px;
    height: 49px;
    display: flex;
    align-items: center;
  }

  .ring {
    width: 43px;
    height: 43px;
    border-radius: 50%;
    border: 1px solid #f0d820;
    outline: 3px solid #2a2e34;
    box-sizing: content-box;
    background: radial-gradient(circle at 50% 35%, #50545a, #24282e);
    color: #f0f0f0;
    font-family: "Open Sans", sans-serif;
    font-size: 18px;
    display: flex;
    align-items: center;
    justify-content: center;
    margin-left: 3px;
    flex: none;
    position: relative;
    z-index: 1;
  }

  .ring small { font-size: 9px; margin-top: 4px; }

  .cpu-info {
    margin-left: -2px;
    width: 52px;
    height: 36px;
    background: #26292f;
    border-radius: 0 12px 12px 0;
    display: flex;
    flex-direction: column;
    align-items: center;
    justify-content: center;
    font-family: "Noto Sans CJK SC", sans-serif;
    font-size: 10px;
    line-height: 14px;
  }

  .cpu-temp { color: #48d060; }
  .cpu-label { color: #9a9ea4; }

  .tv-chevrons {
    position: absolute;
    left: 1025px;
    top: 718px;
  }

  .collapse {
    position: absolute;
    left: 847px;
    top: 748px;
    width: 21px;
    height: 28px;
    background: #fff;
    border-radius: 3px 0 0 3px;
    display: flex;
    align-items: center;
    justify-content: center;
  }

  .net-gadget {
    position: absolute;
    left: 816px;
    top: 776px;
    width: 88px;
    height: 31px;
    padding-left: 24px;
    border-radius: 0 16px 16px 0;
    background: linear-gradient(#f2f2f2, #d8d8d8);
    border: 1px solid #bbb;
    box-sizing: border-box;
    display: flex;
    align-items: center;
  }

  .ball {
    position: absolute;
    left: -20px;
    top: -5px;
    width: 40px;
    height: 40px;
    border-radius: 50%;
    border: 2px solid #e8e8e8;
    box-sizing: border-box;
    background: linear-gradient(#19734a 0, #1a7a50 30%, #3cc36c 31%, #37bb66 100%);
    color: #e8f8ee;
    font-family: "Open Sans", sans-serif;
    font-size: 11px;
    display: flex;
    align-items: center;
    justify-content: center;
  }

  .speeds {
    display: flex;
    flex-direction: column;
    font-size: 8.500px;
    font-weight: 700;
    line-height: 13px;
    color: #333;
  }

  .speeds i {
    font-style: normal;
    margin-right: 5px;
  }

  .speeds .up { color: #e04828; }
  .speeds .down { color: #20984c; }

  .net-plus {
    position: relative;
    margin-left: 5px;
    width: 14px;
    height: 14px;
    border-radius: 50%;
    background: #3a80d8;
    color: #fff;
    font-size: 13px;
    font-weight: 700;
    line-height: 14px;
    text-align: center;
  }

  .net-plus i {
    position: absolute;
    right: -2px;
    top: -4px;
    width: 6px;
    height: 6px;
    border-radius: 50%;
    background: #d8222c;
  }

  .watermark {
    position: absolute;
    left: 911px;
    top: 820px;
    display: flex;
    align-items: center;
    gap: 12px;
    color: #fff;
  }

  .wm-circle {
    width: 31px;
    height: 31px;
    border-radius: 50%;
    background: #fff;
    color: #222;
    font-family: "Noto Sans CJK SC", sans-serif;
    font-size: 21px;
    line-height: 31px;
    text-align: center;
  }

  .wm-text {
    font-family: "Noto Sans CJK SC", sans-serif;
    font-size: 23px;
    font-weight: 300;
    line-height: 31px;
    white-space: nowrap;
  }
</style>
